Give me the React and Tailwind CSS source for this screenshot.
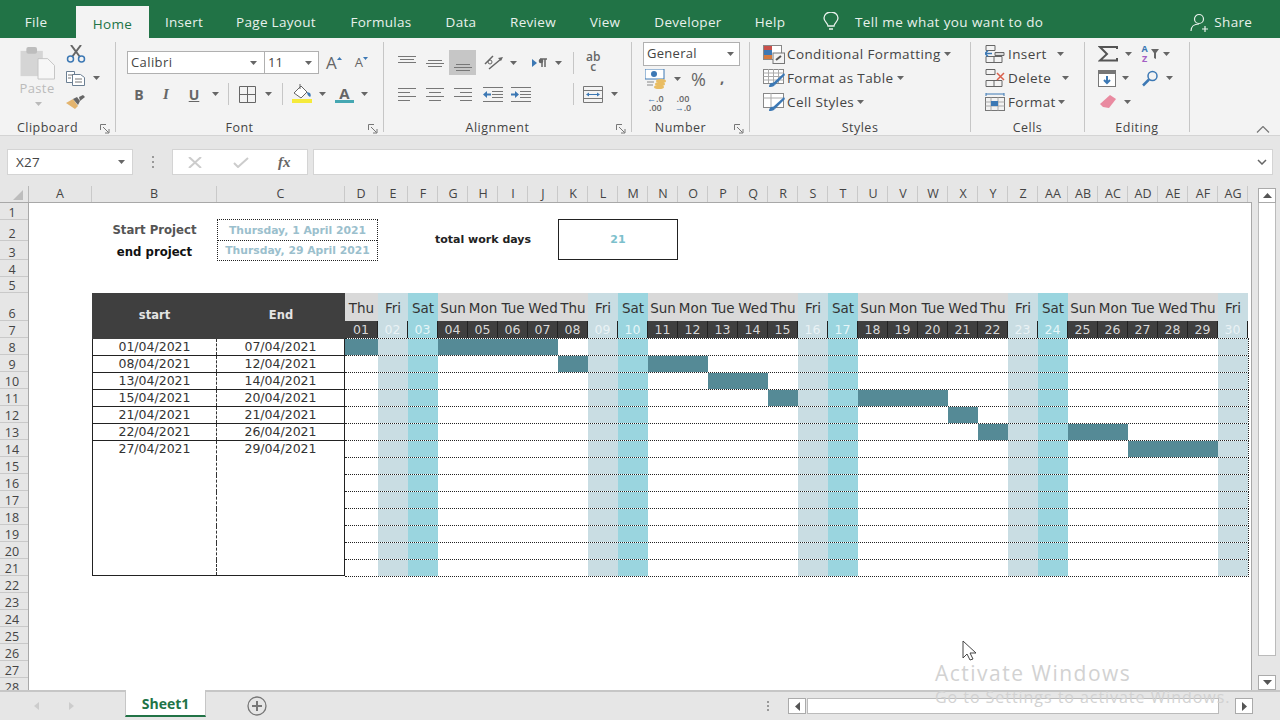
import { Fragment } from "react";

const ribbonTabs = [
  ["File", "w-[72px] mr-[4px]"],
  ["Home", "w-[73px] bg-[#f3f3f3] text-[#217346] h-[32px] mt-[6px]"],
  ["Insert", "w-[70px]"],
  ["Page Layout", "w-[114px]"],
  ["Formulas", "w-[96px]"],
  ["Data", "w-[64px]"],
  ["Review", "w-[80px]"],
  ["View", "w-[64px]"],
  ["Developer", "w-[102px]"],
  ["Help", "w-[62px]"],
];

const columns = [
  ["A", "w-[63px]"],
  ["B", "w-[125px]"],
  ["C", "w-[128px]"],
  ["D", "w-[33px]"],
  ...["E", "F", "G", "H", "I", "J", "K", "L", "M", "N", "O", "P", "Q", "R", "S", "T", "U", "V", "W", "X", "Y", "Z", "AA", "AB", "AC", "AD", "AE", "AF", "AG"].map((c) => [c, "w-[30px] pl-px"]),
];

const rowHeaders = [
  [1, "h-[17px]"],
  [2, "h-[21px]"],
  [3, "h-[19px]"],
  [4, "h-[17px]"],
  [5, "h-[16px]"],
  [6, "h-[28px]"],
];
for (let n = 7; n <= 28; n++) rowHeaders.push([n, "h-[17px]"]);

const dayNames = ["Thu", "Fri", "Sat", "Sun", "Mon", "Tue", "Wed"];
const days = Array.from({ length: 30 }, (_, i) => i + 1);

const tasks = [
  ["01/04/2021", "07/04/2021", 1, 7],
  ["08/04/2021", "12/04/2021", 8, 12],
  ["13/04/2021", "14/04/2021", 13, 14],
  ["15/04/2021", "20/04/2021", 15, 20],
  ["21/04/2021", "21/04/2021", 21, 21],
  ["22/04/2021", "26/04/2021", 22, 26],
  ["27/04/2021", "29/04/2021", 27, 29],
];

const ganttRows = Array.from({ length: 14 }, (_, i) => tasks[i] || null);

function dayName(d) {
  return dayNames[(d - 1) % 7];
}

function Caret({ className = "" }) {
  return (
    <svg width="7" height="4" viewBox="0 0 7 4" className={className}>
      <path d="M0 0h7L3.5 4z" fill="#666" />
    </svg>
  );
}

function Launcher() {
  return (
    <svg width="10" height="10" viewBox="0 0 10 10" className="absolute right-[5px] bottom-[-2px]" fill="none" stroke="#777">
      <path d="M.5 6V.5H6M3 3l5.5 5.5M9 5v4H5" />
    </svg>
  );
}

function Group({ className, label, launcher, children }) {
  return (
    <div className={`h-[90px] shrink-0 border-r border-[#c6c6c6] flex flex-col ${className}`}>
      <div className="h-[76px]">{children}</div>
      <div className={`relative h-[14px] text-center text-[12.5px] leading-[20px] tracking-[0.5px] text-[#444] ${launcher ? "pr-[20px]" : ""}`}>
        {label}
        {launcher && <Launcher />}
      </div>
    </div>
  );
}

function Lines({ kind }) {
  const d = {
    top: "M0 .5h18M2 3.500h14M0 6.500h18",
    middle: "M2 .5h14M0 3.500h18M2 6.500h14",
    bottom: "M2 .5h14M0 3.500h18M2 6.500h14",
  }[kind];
  return (
    <svg width="18" height="7" viewBox="0 0 18 7" fill="none" stroke="#777">
      <path d={d} />
    </svg>
  );
}

function AlignIcon({ kind }) {
  const d = {
    left: "M0 .5h18M0 4.500h12M0 8.500h18M0 12.500h12",
    center: "M0 .5h18M3 4.500h12M0 8.500h18M3 12.500h12",
    right: "M0 .5h18M6 4.500h12M0 8.500h18M6 12.500h12",
  }[kind];
  return (
    <svg width="18" height="13" viewBox="0 0 18 13" fill="none" stroke="#777">
      <path d={d} />
    </svg>
  );
}

function IndentIcon({ flip }) {
  return (
    <svg width="20" height="15" viewBox="0 0 20 15" fill="none">
      <path d="M0 .5h20M9 4.500h11M9 7.500h11M9 10.500h11M0 14.500h20" stroke="#777" />
      <path d={flip ? "M0 6.500h4V4l4 3.500L4 11V8.500H0z" : "M8 6.500H4V4L0 7.500 4 11V8.500h4z"} fill="#3c78b4" />
    </svg>
  );
}

function PasteIcon() {
  return (
    <svg width="36" height="33" viewBox="0 0 36 34" fill="none">
      <rect x="0" y="4" width="23" height="26" fill="#d5d5d5" />
      <rect x="6" y="0" width="11" height="7" rx="2" fill="#bdbdbd" />
      <path d="M18 12h10l7 7v14H18z" fill="#f7f7f7" stroke="#c4c4c4" />
    </svg>
  );
}

function ScissorsIcon() {
  return (
    <svg width="20" height="18" viewBox="0 0 20 18" fill="none">
      <path d="M5 0l9 12M15 0L6 12" stroke="#666" strokeWidth="2" />
      <circle cx="4.500" cy="14" r="3" stroke="#3c78b4" strokeWidth="1.500" />
      <circle cx="15.500" cy="14" r="3" stroke="#3c78b4" strokeWidth="1.500" />
    </svg>
  );
}

function CopyIcon() {
  return (
    <svg width="19" height="15" viewBox="0 0 19 15" fill="#fff" stroke="#6b7f93">
      <path d="M.5.500h8v11h-8z" />
      <path d="M6.500 3.500h8l4 3v8h-12z" />
      <path d="M2 4h5M2 7h3M9 8h7M9 11h7" stroke="#777" />
    </svg>
  );
}

function BrushIcon() {
  return (
    <svg width="20" height="14" viewBox="0 0 20 14">
      <path d="M0 8l7-4 5 7-3 3z" fill="#e3b46e" />
      <path d="M7 4l4-2 3 4-2 4z" fill="#666" />
      <path d="M13 2l4-2 2 2-5 4z" fill="#666" />
    </svg>
  );
}

function FillIcon() {
  return (
    <svg width="21" height="19" viewBox="0 0 21 19" fill="none">
      <path d="M2 9l7-7 6 6-6 6z" fill="#fff" stroke="#666" />
      <path d="M8 0v5" stroke="#666" />
      <path d="M15 8l3 1c1 2 1 3 0 4-2-1-3-3-3-5z" fill="#3c78b4" />
      <rect x="0" y="15" width="20" height="4" fill="#f5ea3b" />
    </svg>
  );
}

function BordersIcon() {
  return (
    <svg width="17" height="17" viewBox="0 0 17 17" fill="none" stroke="#666">
      <path d="M.5.500h16v16H.500zM8.500.500v16M.500 8.500h16" />
    </svg>
  );
}

function MergeIcon() {
  return (
    <svg width="20" height="17" viewBox="0 0 20 17" fill="none">
      <path d="M.5.500h19v16H.500zM.500 4.500h19M.500 12.500h19" stroke="#777" />
      <path d="M4 8.500h12" stroke="#3c78b4" />
      <path d="M3 8.500l3-2v4zM17 8.500l-3-2v4z" fill="#3c78b4" />
    </svg>
  );
}

function OrientIcon() {
  return (
    <svg width="21" height="18" viewBox="0 0 21 18" fill="none">
      <path d="M2 10l8-8M6 15L18 5" stroke="#666" strokeWidth="1.500" />
      <path d="M20 3l-5 1 3 3z" fill="#666" />
      <circle cx="7" cy="8" r="2" stroke="#666" />
    </svg>
  );
}

function MoneyIcon() {
  return (
    <svg width="22" height="20" viewBox="0 0 22 20">
      <rect x="0" y="0" width="19" height="10" fill="#fff" stroke="#3c78b4" />
      <circle cx="9" cy="5" r="3" fill="#3c78b4" />
      <path d="M2 13h7M2 16h6" stroke="#888" />
      <ellipse cx="16" cy="12" rx="5" ry="2" fill="#e9bd63" />
      <ellipse cx="15" cy="15" rx="5" ry="2" fill="#e9bd63" />
      <ellipse cx="14" cy="18" rx="5" ry="2" fill="#e9bd63" />
    </svg>
  );
}

function CondFormatIcon() {
  return (
    <svg width="22" height="19" viewBox="0 0 22 19">
      <rect x=".5" y=".5" width="18" height="14" fill="#fff" stroke="#888" />
      <rect x="1" y="1" width="8" height="4" fill="#c9504a" />
      <rect x="1" y="5" width="8" height="5" fill="#3c78b4" />
      <rect x="1" y="10" width="8" height="4" fill="#d67b3f" />
      <rect x="10" y="8" width="11.500" height="10.500" fill="#f3f3f3" stroke="#777" />
      <path d="M13 15l5-4" stroke="#555" strokeWidth="2" />
    </svg>
  );
}

function TableBrushIcon({ grid }) {
  return (
    <svg width="22" height="19" viewBox="0 0 22 19" fill="none">
      <rect x=".5" y=".5" width="20" height="14" fill="#fff" stroke="#888" />
      <path d={grid ? "M.5 4h20M.5 7.500h20M.5 11h20M5.500 0v14M10.500 0v14M15.500 0v14" : "M.5 5h20M8 0v14"} stroke="#aaa" />
      <path d="M21 4L10 14l2 2L22 6z" fill="#3c78b4" />
      <path d="M6 18c0-3 2-5 5-4l1 2c-2 2-4 2-6 2z" fill="#3c78b4" />
    </svg>
  );
}

function CellsIcon({ kind }) {
  return (
    <svg width="20" height="18" viewBox="0 0 20 18" fill="none">
      <path d="M1 .5h9v5H1zM1 11.500h16v6H1zM9 11.500v6" stroke="#666" />
      {kind === "insert" && (
        <Fragment>
          <path d="M10 7.500h9v3h-9z" stroke="#666" fill="#d9d9d9" />
          <path d="M0 8.500h7M0 8.500l3-3M0 8.500l3 3" stroke="#3c78b4" strokeWidth="1.500" />
        </Fragment>
      )}
      {kind === "delete" && <path d="M12 4l7 7M19 4l-7 7" stroke="#d9604c" strokeWidth="1.500" />}
    </svg>
  );
}

function CellFormatIcon() {
  return (
    <svg width="20" height="18" viewBox="0 0 20 18" fill="none">
      <path d="M1 1h18M1 0v3M19 0v3" stroke="#3c78b4" />
      <rect x=".5" y="4.500" width="19" height="13" fill="#f2f2f2" stroke="#777" />
      <path d="M.5 9h19M.5 13h19M6 4.500v13M13 4.500v13" stroke="#aaa" />
      <rect x="6" y="8" width="7" height="5" fill="#3c78b4" />
    </svg>
  );
}

function SumIcon() {
  return (
    <svg width="20" height="16" viewBox="0 0 20 16" fill="none">
      <path d="M19 3V1H2l7 7-7 6.500h17V12" stroke="#555" strokeWidth="2" />
    </svg>
  );
}

function SortIcon() {
  return (
    <div className="flex items-center">
      <div className="flex w-[9px] flex-col items-center text-[9px] font-bold leading-[10px]">
        <span className="text-[#3c78b4]">A</span>
        <span className="text-[#a45fc4]">Z</span>
      </div>
      <svg width="10" height="10" viewBox="0 0 10 10" className="ml-[1px]">
        <path d="M1 0h8L6 4v6L4 9V4z" fill="#666" />
      </svg>
    </div>
  );
}

function FillDownIcon() {
  return (
    <svg width="18" height="17" viewBox="0 0 18 17" fill="none">
      <rect x=".5" y=".5" width="17" height="16" fill="#fff" stroke="#777" />
      <rect x="1" y="1" width="16" height="3" fill="#777" />
      <path d="M9 6v7M6 10l3 3 3-3" stroke="#3c78b4" strokeWidth="2" />
    </svg>
  );
}

function FindIcon() {
  return (
    <svg width="17" height="17" viewBox="0 0 17 17" fill="none">
      <circle cx="10.500" cy="6" r="4.500" stroke="#3c78b4" strokeWidth="1.500" />
      <path d="M7 9.500l-6 6" stroke="#3c78b4" strokeWidth="2.500" />
    </svg>
  );
}

function EraserIcon() {
  return (
    <svg width="16" height="14" viewBox="0 0 16 14">
      <path d="M10 0l6 4-7 9-6-1-3-3z" fill="#e98aa0" />
    </svg>
  );
}

function FormatRow({ icon, label, caret, labelClass = "w-[44px]", caretClass = "ml-[5px]" }) {
  return (
    <div className="flex h-[24px] items-center">
      <div className="flex w-[24px] shrink-0 justify-center">{icon}</div>
      <span className={`text-[13.5px] tracking-[0.4px] text-[#444] whitespace-nowrap ml-[1px] ${labelClass}`}>{label}</span>
      {caret && <Caret className={caretClass} />}
    </div>
  );
}

function Ribbon() {
  return (
    <div className="flex h-[98px] shrink-0 border-b border-[#d4d4d4] bg-[#f3f3f3] pt-[4px]">
      <Group className="w-[116px]" label="Clipboard" launcher>
        <div className="flex">
          <div className="ml-[20px] flex w-[36px] flex-col items-center pt-[5px]">
            <PasteIcon />
            <span className="ml-[-2px] mt-[-1px] text-[13px] leading-[18px] tracking-[0.4px] text-[#bbb]">Paste</span>
            <Caret className="mt-[5px] opacity-40" />
          </div>
          <div className="ml-[10px] flex flex-col">
            <div className="flex h-[24px] items-center"><ScissorsIcon /></div>
            <div className="flex h-[24px] items-center"><CopyIcon /><Caret className="ml-[8px]" /></div>
            <div className="flex h-[24px] items-center"><BrushIcon /></div>
          </div>
        </div>
      </Group>

      <Group className="w-[268px]" label="Font" launcher>
        <div className="ml-[11px] mt-[9px] flex h-[23px] items-center">
          <div className="flex h-full w-[138px] items-center justify-between border border-[#b0b0b0] bg-white pl-[3px] pr-[7px] text-[13px] tracking-[0.4px] text-[#444]">
            Calibri
            <Caret />
          </div>
          <div className="flex h-full w-[54px] items-center justify-between border border-l-0 border-[#b0b0b0] bg-white pl-[3px] pr-[6px] text-[13px] text-[#444]">
            11
            <Caret />
          </div>
          <span className="ml-[7px] text-[17px] leading-none text-[#666]">A</span>
          <svg width="5" height="3" viewBox="0 0 5 3" className="mb-[8px]"><path d="M0 3l2.500-3L5 3z" fill="#3c78b4" /></svg>
          <span className="ml-[13px] text-[13px] leading-none text-[#666]">A</span>
          <svg width="5" height="3" viewBox="0 0 5 3" className="mb-[8px]"><path d="M0 0l2.500 3L5 0z" fill="#3c78b4" /></svg>
        </div>
        <div className="ml-[15px] mt-[8px] flex h-[24px] items-center text-[#666]">
          <span className="w-[16px] text-center text-[14px] font-bold">B</span>
          <span className="ml-[11px] w-[16px] text-center font-['Liberation_Serif',serif] text-[15px] font-bold italic">I</span>
          <span className="ml-[12px] w-[16px] text-center text-[14px] font-bold underline">U</span>
          <Caret className="ml-[10px]" />
          <div className="ml-[9px] h-[22px] w-px bg-[#c6c6c6]" />
          <div className="ml-[10px]"><BordersIcon /></div>
          <Caret className="ml-[9px]" />
          <div className="ml-[10px] h-[22px] w-px bg-[#c6c6c6]" />
          <div className="ml-[9px] mt-[-2px]"><FillIcon /></div>
          <Caret className="ml-[6px]" />
          <div className="ml-[9px] flex flex-col items-center">
            <span className="text-[15px] font-bold leading-[14px]">A</span>
            <div className="h-[3px] w-[19px] bg-[#45a7b2]" />
          </div>
          <Caret className="ml-[7px]" />
        </div>
      </Group>

      <Group className="w-[248px]" label="Alignment" launcher>
        <div className="ml-[9px] mt-[8px] flex h-[25px] items-center">
          <div className="flex w-[28px] justify-center pb-[7px]"><Lines kind="top" /></div>
          <div className="flex w-[28px] justify-center pt-[2px]"><Lines kind="middle" /></div>
          <div className="flex h-full w-[27px] items-center justify-center bg-[#c6c6c6] pt-[9px]"><Lines kind="bottom" /></div>
          <div className="ml-[7px]"><OrientIcon /></div>
          <Caret className="ml-[6px]" />
          <svg width="16" height="10" viewBox="0 0 16 10" className="ml-[15px]">
            <path d="M0 1l5 4-5 4z" fill="#3c78b4" />
            <path d="M8 1h7M10 1v8M13 1v8" stroke="#666" strokeWidth="1.500" />
            <circle cx="9" cy="3" r="2.300" fill="#666" />
          </svg>
          <Caret className="ml-[7px]" />
          <div className="ml-[11px] h-[22px] w-px bg-[#c6c6c6]" />
          <div className="ml-[12px] mt-[-2px] text-center text-[12px] font-semibold leading-[10px] text-[#666]">ab<br />c</div>
        </div>
        <div className="ml-[9px] mt-[7px] flex h-[24px] items-center">
          <div className="flex w-[28px] justify-center"><AlignIcon kind="left" /></div>
          <div className="flex w-[28px] justify-center"><AlignIcon kind="center" /></div>
          <div className="flex w-[27px] justify-center"><AlignIcon kind="right" /></div>
          <div className="ml-[7px]"><IndentIcon /></div>
          <div className="ml-[8px]"><IndentIcon flip /></div>
          <div className="ml-[42px] h-[22px] w-px bg-[#c6c6c6]" />
          <div className="ml-[9px]"><MergeIcon /></div>
          <Caret className="ml-[8px]" />
        </div>
      </Group>

      <Group className="w-[118px]" label="Number" launcher>
        <div className="ml-[11px] flex h-[24px] w-[97px] items-center justify-between border border-[#b0b0b0] bg-white pl-[3px] pr-[5px] text-[13px] tracking-[0.3px] text-[#444]">
          General
          <Caret />
        </div>
        <div className="ml-[13px] mt-[1px] flex h-[24px] items-center">
          <MoneyIcon />
          <Caret className="ml-[7px]" />
          <span className="ml-[10px] text-[18px] leading-none text-[#666]">%</span>
          <span className="ml-[14px] mb-[4px] text-[15px] font-bold leading-none text-[#666]">,</span>
        </div>
        <div className="ml-[15px] flex h-[24px] items-center gap-[11px] text-[9px] font-semibold leading-[9px] text-[#666]">
          <div className="text-center"><span className="text-[#3c78b4]">←</span>.0<br />.00</div>
          <div className="text-center">.00<br /><span className="text-[#3c78b4]">→</span>.0</div>
        </div>
      </Group>

      <Group className="w-[221px]" label="Styles">
        <div className="ml-[12px]">
          <FormatRow icon={<CondFormatIcon />} label="Conditional Formatting" labelClass="" caret caretClass="ml-[3px]" />
          <FormatRow icon={<TableBrushIcon grid />} label="Format as Table" labelClass="" caret caretClass="ml-[3px]" />
          <FormatRow icon={<TableBrushIcon />} label="Cell Styles" labelClass="" caret caretClass="ml-[3px]" />
        </div>
      </Group>

      <Group className="w-[114px]" label="Cells">
        <div className="ml-[12px]">
          <FormatRow icon={<CellsIcon kind="insert" />} label="Insert" caret caretClass="ml-[5px]" />
          <FormatRow icon={<CellsIcon kind="delete" />} label="Delete" caret caretClass="ml-[10px]" />
          <FormatRow icon={<CellFormatIcon />} label="Format" caret caretClass="ml-[6px]" />
        </div>
      </Group>

      <Group className="w-[105px]" label="Editing">
        <div className="ml-[13px]">
          <div className="flex h-[24px] items-center">
            <SumIcon />
            <Caret className="ml-[7px]" />
            <div className="ml-[8px]"><SortIcon /></div>
            <Caret className="ml-[3px]" />
          </div>
          <div className="flex h-[24px] items-center">
            <FillDownIcon />
            <Caret className="ml-[6px]" />
            <div className="ml-[13px]"><FindIcon /></div>
            <Caret className="ml-[7px]" />
          </div>
          <div className="flex h-[24px] items-center pl-[2px]">
            <EraserIcon />
            <Caret className="ml-[8px]" />
          </div>
        </div>
      </Group>

      <div className="flex flex-1 items-end justify-end pb-[2px] pr-[10px]">
        <svg width="14" height="7" viewBox="0 0 14 7" fill="none" stroke="#777" strokeWidth="1.200">
          <path d="M1 6.500l6-6 6 6" />
        </svg>
      </div>
    </div>
  );
}

function TitleBar() {
  return (
    <div className="flex h-[38px] shrink-0 bg-[#217346] text-[13.5px] tracking-[0.3px] text-[#e8f1ec]">
      {ribbonTabs.map(([name, cls]) => (
        <div key={name} className={`flex h-full items-center justify-center ${cls}`}>
          <span className={name === "Home" ? "mt-[-2px]" : "mt-[6px]"}>{name}</span>
        </div>
      ))}
      <div className="ml-[22px] mt-[6px] flex items-center">
        <svg width="16" height="20" viewBox="0 0 16 20" fill="none" stroke="#e8f1ec" strokeWidth="1.300">
          <path d="M5 14c0-3-4-4-4-8a7 6 0 0 1 14 0c0 4-4 5-4 8zM6 17h4" />
        </svg>
        <span className="ml-[16px] tracking-[0.4px]">Tell me what you want to do</span>
      </div>
      <div className="ml-[147px] mt-[6px] flex items-center">
        <svg width="19" height="19" viewBox="0 0 19 19" fill="none" stroke="#e8f1ec" strokeWidth="1.200">
          <circle cx="9" cy="6" r="4.500" />
          <path d="M1 18c0-4 3-7 8-7M12 16h6M15 13v6" />
        </svg>
        <span className="ml-[5px]">Share</span>
      </div>
    </div>
  );
}

function FormulaBar() {
  return (
    <div className="flex h-[50px] shrink-0 items-start bg-[#e6e6e6] pl-[7px] pt-[13px]">
      <div className="flex h-[26px] w-[126px] items-center justify-between border border-[#d4d4d4] bg-white pl-[8px] pr-[7px] text-[13.5px] tracking-[0.3px] text-[#444]">
        X27
        <Caret />
      </div>
      <div className="flex h-[26px] w-[39px] items-center justify-center">
        <div className="flex flex-col gap-[3px]">
          <div className="h-[2px] w-[2px] bg-[#999]" />
          <div className="h-[2px] w-[2px] bg-[#999]" />
          <div className="h-[2px] w-[2px] bg-[#999]" />
        </div>
      </div>
      <div className="flex h-[26px] w-[136px] items-center border border-[#d4d4d4] bg-white">
        <svg width="14" height="11" viewBox="0 0 14 11" className="ml-[15px]" fill="none" stroke="#ccc" strokeWidth="2"><path d="M1 0l12 11M13 0L1 11" /></svg>
        <svg width="16" height="11" viewBox="0 0 16 11" className="ml-[31px]" fill="none" stroke="#ccc" strokeWidth="2"><path d="M1 6l4 4L15 1" /></svg>
        <span className="ml-[29px] font-['Liberation_Serif',serif] text-[15px] font-bold italic text-[#666]">fx</span>
      </div>
      <div className="ml-[5px] flex h-[26px] w-[960px] items-center justify-end border border-[#d4d4d4] bg-white pr-[5px]">
        <svg width="10" height="6" viewBox="0 0 10 6" fill="none" stroke="#666" strokeWidth="1.500"><path d="M1 1l4 4 4-4" /></svg>
      </div>
    </div>
  );
}

function ColumnHeader() {
  return (
    <div className="flex h-[17px] shrink-0 bg-[#e6e6e6] border-b border-[#a8a8a8]">
      <div className="flex w-[29px] shrink-0 items-end justify-end border-r border-[#b8b8b8] pb-[2px] pr-[5px]">
        <svg width="10" height="10" viewBox="0 0 10 10"><path d="M10 0v10H0z" fill="#bdbdbd" /></svg>
      </div>
      {columns.map(([name, w]) => (
        <div key={name} className={`${w} shrink-0 border-r border-[#c9c9c9] text-center text-[12.5px] leading-[15px] text-[#444]`}>
          {name}
        </div>
      ))}
      <div className="flex-1" />
    </div>
  );
}

function RowHeader() {
  return (
    <div className="w-[29px] shrink-0 overflow-hidden border-r border-[#a8a8a8] bg-[#e6e6e6]">
      {rowHeaders.map(([n, h]) => (
        <div key={n} className={`${h} flex items-end justify-center border-b border-[#c9c9c9] pr-[4px] text-[12.5px] leading-[13px] text-[#444]`}>
          {n}
        </div>
      ))}
    </div>
  );
}

function ProjectInfo() {
  return (
    <div className="ml-[63px] flex h-[74px] pt-[16px] font-['DejaVu_Sans',sans-serif] font-bold">
      <div className="flex w-[125px] flex-col items-center text-[11.7px]">
        <div className="flex h-[21px] items-center pt-[2px] text-[#555]">Start Project</div>
        <div className="flex h-[23px] items-center pt-[2px] text-[#111]">end project</div>
      </div>
      <div className="flex h-[42px] w-[161px] flex-col border border-dotted border-[#222] text-[10.8px]">
        <div className="flex h-[21px] items-center justify-center border-b border-dotted border-[#222] pt-[2px] text-[#9bbfcd]">Thursday, 1 April 2021</div>
        <div className="flex flex-1 items-center justify-center pt-[2px] text-[#9bbfcd]">Thursday, 29 April 2021</div>
      </div>
      <div className="ml-[57px] flex h-[41px] w-[123px] items-center pt-[2px] text-[11px] text-[#222]">total work days</div>
      <div className="flex h-[41px] w-[120px] items-center justify-center border border-[#222] pt-[2px] text-[11px] text-[#7cc0cc]">21</div>
    </div>
  );
}

function DatesTable() {
  return (
    <div className="w-[253px] shrink-0 font-['DejaVu_Sans',sans-serif] text-[12.5px] text-[#333]">
      <div className="flex h-[46px] items-center bg-[#3f3f3f] text-[11.5px] font-bold text-[#e4e4e4]">
        <div className="w-[125px] text-center">start</div>
        <div className="w-[128px] text-center">End</div>
      </div>
      <div className="border-x border-b border-[#222]">
        {ganttRows.map((task, i) => (
          <div key={i} className={`flex ${i === 13 ? "h-[15px]" : "h-[17px]"} ${i < 6 ? "border-b border-[#222]" : ""}`}>
            <div className="flex w-[124px] items-center justify-center border-r border-dashed border-[#333]">{task && task[0]}</div>
            <div className="flex flex-1 items-center justify-center">{task && task[1]}</div>
          </div>
        ))}
      </div>
    </div>
  );
}

function Gantt() {
  return (
    <div className="w-[904px] shrink-0 font-['DejaVu_Sans',sans-serif] text-[13.5px]">
      <div className="flex h-[28px]">
        {days.map((d) => {
          const name = dayName(d);
          const bg = name === "Fri" ? "bg-[#c9dde3]" : name === "Sat" ? "bg-[#9ad5df]" : "bg-[#d9d9d9]";
          return (
            <div key={d} className={`${d === 1 ? "w-[33px]" : "w-[30px]"} ${bg} flex items-end justify-center pb-[5px] leading-[16px] text-[#333] whitespace-nowrap`}>
              {name}
            </div>
          );
        })}
      </div>
      <div className="flex h-[18px] border-b border-dotted border-[#222] text-[12.5px]">
        {days.map((d) => {
          const name = dayName(d);
          const bg = name === "Fri" ? "bg-[#c9dde3] text-[#e9f2f5]" : name === "Sat" ? "bg-[#9ad5df] text-[#e4f5f8]" : "bg-[#3f3f3f] text-[#d9d9d9]";
          return (
            <div key={d} className={`${d === 1 ? "w-[33px]" : "w-[30px]"} ${bg} flex items-center justify-center border-r border-[#222] pt-[1px]`}>
              {String(d).padStart(2, "0")}
            </div>
          );
        })}
      </div>
      {ganttRows.map((task, i) => (
        <div key={i} className="flex h-[17px] border-r border-b border-dotted border-[#222]">
          {days.map((d) => {
            const name = dayName(d);
            const active = task && d >= task[2] && d <= task[3];
            let bg = "bg-white";
            if (name === "Fri") bg = "bg-[#c9dde3]";
            else if (name === "Sat") bg = "bg-[#9ad5df]";
            else if (active) bg = "bg-[#558a96]";
            return <div key={d} className={`${d === 1 ? "w-[33px]" : "w-[30px]"} ${bg}`} />;
          })}
        </div>
      ))}
    </div>
  );
}

function VerticalScroll() {
  return (
    <div className="flex w-[28px] shrink-0 flex-col bg-[#e6e6e6] pl-[6px] pr-[4px] pt-[2px]">
      <div className="flex h-[15px] shrink-0 items-center justify-center border border-[#aaa] bg-white">
        <svg width="9" height="5" viewBox="0 0 9 5"><path d="M0 5l4.500-5L9 5z" fill="#555" /></svg>
      </div>
      <div className="mb-[19px] flex-1 border-x border-b border-[#bbb] bg-white" />
      <div className="flex h-[15px] shrink-0 items-center justify-center border border-[#aaa] bg-white">
        <svg width="9" height="5" viewBox="0 0 9 5"><path d="M0 0l4.500 5L9 0z" fill="#555" /></svg>
      </div>
    </div>
  );
}

function SheetTabs() {
  return (
    <div className="flex h-[30px] shrink-0 border-t-2 border-[#c6c6c6] bg-[#e6e6e6]">
      <div className="flex w-[125px] shrink-0 items-center pl-[34px]">
        <svg width="5" height="8" viewBox="0 0 5 8"><path d="M5 0v8L0 4z" fill="#ccc" /></svg>
        <svg width="5" height="8" viewBox="0 0 5 8" className="ml-[30px]"><path d="M0 0v8l5-4z" fill="#ccc" /></svg>
      </div>
      <div className="mt-[-2px] flex h-[27px] w-[81px] shrink-0 items-center justify-center border-x border-b-2 border-x-[#c6c6c6] border-b-[#217346] bg-white pt-[1px] text-[14px] font-bold text-[#217346]">
        Sheet1
      </div>
      <div className="ml-[41px] flex h-full items-center">
        <svg width="20" height="20" viewBox="0 0 20 20" fill="none" stroke="#777" strokeWidth="1.300">
          <circle cx="10" cy="10" r="9" />
          <path d="M10 5v10M5 10h10" strokeWidth="2" />
        </svg>
      </div>
      <div className="ml-[500px] flex h-full items-center">
        <div className="flex flex-col gap-[2px]">
          <div className="h-[2px] w-[2px] bg-[#999]" />
          <div className="h-[2px] w-[2px] bg-[#999]" />
          <div className="h-[2px] w-[2px] bg-[#999]" />
        </div>
      </div>
      <div className="ml-[19px] mt-[6px] flex h-[16px] w-[465px]">
        <div className="flex w-[18px] items-center justify-center border border-[#aaa] bg-white">
          <svg width="5" height="9" viewBox="0 0 5 9"><path d="M5 0v9L0 4.500z" fill="#555" /></svg>
        </div>
        <div className="ml-[1px] w-[412px] border border-[#bbb] bg-white" />
        <div className="flex-1" />
        <div className="flex w-[18px] items-center justify-center border border-[#aaa] bg-white">
          <svg width="5" height="9" viewBox="0 0 5 9"><path d="M0 0v9l5-4.500z" fill="#555" /></svg>
        </div>
      </div>
    </div>
  );
}

export default function App() {
  return (
    <div className="relative flex h-[720px] w-[1280px] flex-col overflow-hidden bg-white font-['Open_Sans',sans-serif]">
      <TitleBar />
      <Ribbon />
      <FormulaBar />
      <div className="flex min-h-0 flex-1 bg-[#e6e6e6]">
        <div className="flex w-[1252px] shrink-0 flex-col">
          <ColumnHeader />
          <div className="flex min-h-0 flex-1">
            <RowHeader />
            <div className="flex-1 overflow-hidden border-r border-[#a8a8a8] bg-white">
              <ProjectInfo />
              <div className="ml-[63px] mt-[16px] flex">
                <DatesTable />
                <Gantt />
              </div>
            </div>
          </div>
        </div>
        <VerticalScroll />
      </div>
      <SheetTabs />

      {/* mouse pointer and the windows watermark lie over the sheet */}
      <svg width="16" height="22" viewBox="0 0 16 22" className="absolute left-[962px] top-[640px]" fill="#fff" stroke="#444">
        <path d="M1 1v17l4-4 3 6 3-1-3-6h6z" />
      </svg>
      <div className="pointer-events-none absolute left-[935px] top-[659px] text-[21px] leading-[28px] tracking-[1.5px] text-[#d2d2d2]">Activate Windows</div>
      <div className="pointer-events-none absolute left-[935px] top-[687px] text-[16px] leading-[20px] tracking-[0.95px] text-[#d2d2d2] whitespace-nowrap">Go to Settings to activate Windows.</div>
    </div>
  );
}
